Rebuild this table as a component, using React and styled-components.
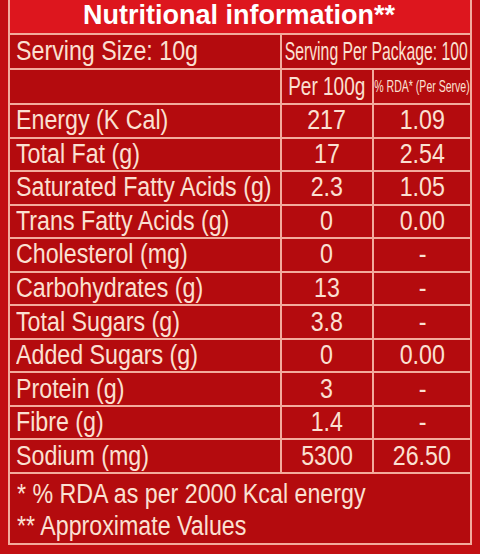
import styled, { createGlobalStyle } from 'styled-components'

const GlobalStyle = createGlobalStyle`
  html, body {
    margin: 0;
    padding: 0;
    background: #c20f12;
  }
  body {
    width: 480px;
    height: 554px;
    overflow: hidden;
    font-family: "Liberation Sans", Arial, sans-serif;
  }
`

const rows = [
  ['Energy (K Cal)', '217', '1.09'],
  ['Total Fat (g)', '17', '2.54'],
  ['Saturated Fatty Acids (g)', '2.3', '1.05'],
  ['Trans Fatty Acids (g)', '0', '0.00'],
  ['Cholesterol (mg)', '0', '-'],
  ['Carbohydrates (g)', '13', '-'],
  ['Total Sugars (g)', '3.8', '-'],
  ['Added Sugars (g)', '0', '0.00'],
  ['Protein (g)', '3', '-'],
  ['Fibre (g)', '1.4', '-'],
  ['Sodium (mg)', '5300', '26.50'],
]

function App() {
  return (
    <>
      <GlobalStyle />
      <Panel>
        <Title>Nutritional information**</Title>
        <Table>
          <Cell>
            <Text>Serving Size: 10g</Text>
          </Cell>
          <Cell $span={2} $divider $center>
            <Text $size={25} $sx={0.63} $center>
              Serving Per Package: 100
            </Text>
          </Cell>
          <Cell />
          <Cell $divider $center>
            <Text $size={25} $sx={0.76} $center>
              Per 100g
            </Text>
          </Cell>
          <Cell $divider $center>
            <Text $size={17} $sx={0.62} $center>
              % RDA* (Per Serve)
            </Text>
          </Cell>
          {rows.map(([name, per100, rda]) => (
            <Row key={name}>
              <Cell>
                <Text>{name}</Text>
              </Cell>
              <Cell $divider $center>
                <Text $center>{per100}</Text>
              </Cell>
              <Cell $divider $center>
                <Text $center>{rda}</Text>
              </Cell>
            </Row>
          ))}
        </Table>
        <Footer>
          <Text>* % RDA as per 2000 Kcal energy</Text>
          <Text>** Approximate Values</Text>
        </Footer>
      </Panel>
    </>
  )
}

const Panel = styled.div`
  margin-left: 8px;
  width: 464px;
  border-left: 2px solid #f3ab9c;
  border-right: 2px solid #f3ab9c;
  border-bottom: 2px solid #f3ab9c;
  box-sizing: border-box;
  color: #fbe0d2;
`

const Title = styled.h1`
  margin: 0;
  height: 33px;
  background: #dd161e;
  color: #ffffff;
  font-size: 27px;
  font-weight: 700;
  text-align: center;
  line-height: 31px;
  padding-right: 2px;
`

const Table = styled.div`
  display: grid;
  grid-template-columns: 270px 92px 1fr;
  grid-template-rows: 35px 35px;
  grid-auto-rows: 33.55px;
  background: #b40b0e;
`

const Row = styled.div`
  display: contents;
`

const Cell = styled.div`
  grid-column: span ${(p) => p.$span || 1};
  min-width: 0;
  border-top: 2px solid #f3ab9c;
  border-left: ${(p) => (p.$divider ? '2px solid #f3ab9c' : 'none')};
  display: flex;
  align-items: center;
  justify-content: ${(p) => (p.$center ? 'center' : 'flex-start')};
  padding: 0 ${(p) => (p.$center ? '0' : '6px')};
  white-space: nowrap;
`

const Text = styled.span`
  display: inline-block;
  font-size: ${(p) => p.$size || 27}px;
  transform: scaleX(${(p) => p.$sx || 0.86});
  transform-origin: ${(p) => (p.$center ? 'center' : 'left')};
  white-space: nowrap;
`

const Footer = styled.div`
  border-top: 2px solid #f3ab9c;
  background: #b40b0e;
  height: 71px;
  padding: 4px 0 0 7px;
  display: flex;
  flex-direction: column;
  line-height: 32px;
  box-sizing: border-box;
`

export default App
